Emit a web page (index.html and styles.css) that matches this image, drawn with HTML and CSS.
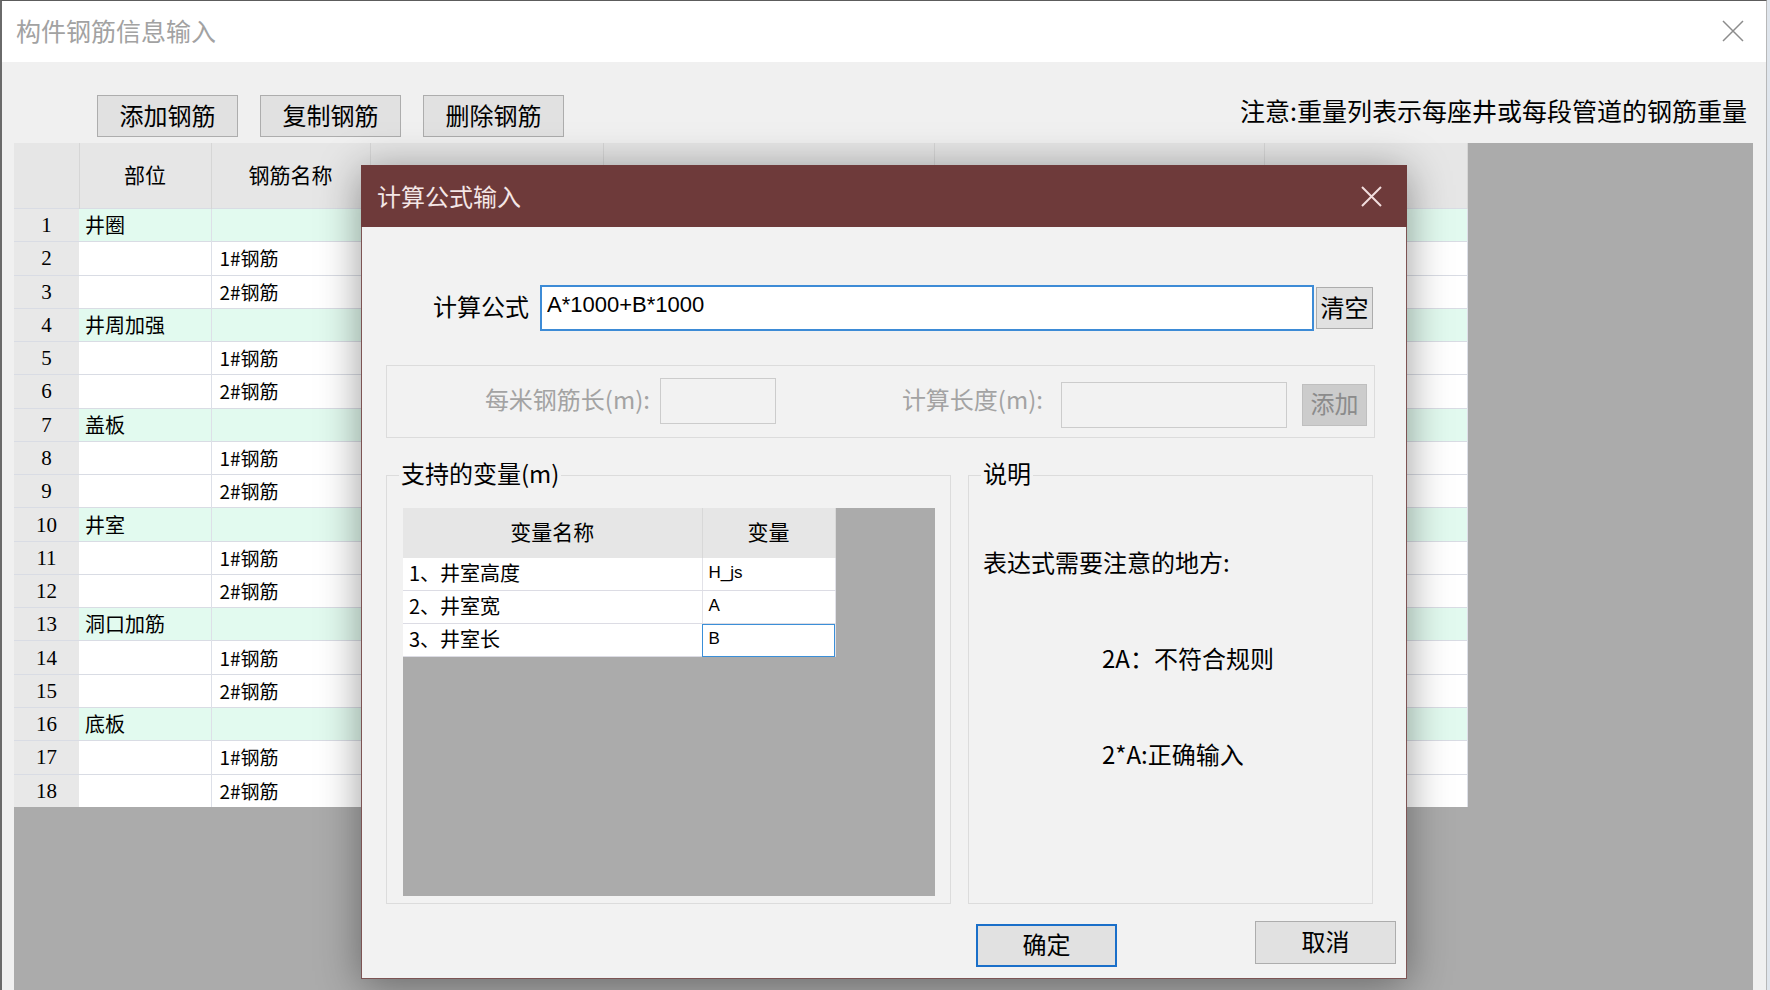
FILE: index.html
```html
<!DOCTYPE html>
<html lang="zh-CN">
<head>
  <meta charset="UTF-8">
  <title>构件钢筋信息输入</title>
  <link rel="stylesheet" href="styles.css">
</head>
<body>
<div class="window">
  <!-- 标题栏 -->
  <div class="titlebar">
    <span class="title">构件钢筋信息输入</span>
    <svg class="win-close" width="22" height="22" viewBox="0 0 22 22"><path d="M1 1L21 21M21 1L1 21" stroke="#8c8c8c" stroke-width="1.5" fill="none"/></svg>
  </div>

  <!-- 工具栏 -->
  <div class="toolbar">
    <button class="btn tool-btn">添加钢筋</button>
    <button class="btn tool-btn">复制钢筋</button>
    <button class="btn tool-btn">删除钢筋</button>
    <span class="note">注意:重量列表示每座井或每段管道的钢筋重量</span>
  </div>

  <!-- 钢筋表格 -->
  <div class="grid-area">
    <table class="rebar-table">
      <colgroup>
        <col style="width:65px"><col style="width:132px"><col style="width:159px"><col style="width:233px"><col style="width:331px"><col style="width:330px"><col style="width:203px">
      </colgroup>
      <thead>
        <tr><th></th><th>部位</th><th>钢筋名称</th><th></th><th></th><th></th><th></th></tr>
      </thead>
      <tbody>
        <tr class="part-row"><td class="num">1</td><td class="part">井圈</td><td></td><td></td><td></td><td></td><td></td></tr>
        <tr><td class="num">2</td><td></td><td class="name">1#钢筋</td><td></td><td></td><td></td><td></td></tr>
        <tr><td class="num">3</td><td></td><td class="name">2#钢筋</td><td></td><td></td><td></td><td></td></tr>
        <tr class="part-row"><td class="num">4</td><td class="part">井周加强</td><td></td><td></td><td></td><td></td><td></td></tr>
        <tr><td class="num">5</td><td></td><td class="name">1#钢筋</td><td></td><td></td><td></td><td></td></tr>
        <tr><td class="num">6</td><td></td><td class="name">2#钢筋</td><td></td><td></td><td></td><td></td></tr>
        <tr class="part-row"><td class="num">7</td><td class="part">盖板</td><td></td><td></td><td></td><td></td><td></td></tr>
        <tr><td class="num">8</td><td></td><td class="name">1#钢筋</td><td></td><td></td><td></td><td></td></tr>
        <tr><td class="num">9</td><td></td><td class="name">2#钢筋</td><td></td><td></td><td></td><td></td></tr>
        <tr class="part-row"><td class="num">10</td><td class="part">井室</td><td></td><td></td><td></td><td></td><td></td></tr>
        <tr><td class="num">11</td><td></td><td class="name">1#钢筋</td><td></td><td></td><td></td><td></td></tr>
        <tr><td class="num">12</td><td></td><td class="name">2#钢筋</td><td></td><td></td><td></td><td></td></tr>
        <tr class="part-row"><td class="num">13</td><td class="part">洞口加筋</td><td></td><td></td><td></td><td></td><td></td></tr>
        <tr><td class="num">14</td><td></td><td class="name">1#钢筋</td><td></td><td></td><td></td><td></td></tr>
        <tr><td class="num">15</td><td></td><td class="name">2#钢筋</td><td></td><td></td><td></td><td></td></tr>
        <tr class="part-row"><td class="num">16</td><td class="part">底板</td><td></td><td></td><td></td><td></td><td></td></tr>
        <tr><td class="num">17</td><td></td><td class="name">1#钢筋</td><td></td><td></td><td></td><td></td></tr>
        <tr><td class="num">18</td><td></td><td class="name">2#钢筋</td><td></td><td></td><td></td><td></td></tr>
      </tbody>
    </table>
  </div>

  <!-- 计算公式输入 对话框 -->
  <div class="dialog">
    <div class="dlg-header">
      <span class="dlg-title">计算公式输入</span>
      <svg class="dlg-close" width="21" height="21" viewBox="0 0 21 21"><path d="M1 1L20 20M20 1L1 20" stroke="#f2dede" stroke-width="2" fill="none"/></svg>
    </div>
    <div class="dlg-body">
      <div class="formula-row">
        <span class="formula-label">计算公式</span>
        <input class="formula-input" type="text" value="A*1000+B*1000">
        <button class="btn clear-btn">清空</button>
      </div>

      <div class="length-box">
        <span class="dis-label label-1">每米钢筋长(m):</span>
        <input class="dis-input input-1" type="text" disabled>
        <span class="dis-label label-2">计算长度(m):</span>
        <input class="dis-input input-2" type="text" disabled>
        <button class="btn add-btn" disabled>添加</button>
      </div>

      <div class="groups">
        <fieldset class="group-box vars">
          <legend>支持的变量(m)</legend>
          <div class="var-grid">
            <table class="var-table">
              <colgroup><col style="width:299px"><col style="width:133px"></colgroup>
              <thead>
                <tr><th>变量名称</th><th>变量</th></tr>
              </thead>
              <tbody>
                <tr><td>1、井室高度</td><td class="code">H_js</td></tr>
                <tr><td>2、井室宽</td><td class="code">A</td></tr>
                <tr><td>3、井室长</td><td class="code selected">B</td></tr>
              </tbody>
            </table>
          </div>
        </fieldset>

        <fieldset class="group-box help">
          <legend>说明</legend>
          <p class="help-head">表达式需要注意的地方:</p>
          <p class="help-item">2A：不符合规则</p>
          <p class="help-item">2*A:正确输入</p>
        </fieldset>
      </div>

      <div class="dlg-footer">
        <button class="btn ok-btn">确定</button>
        <button class="btn cancel-btn">取消</button>
      </div>
    </div>
  </div>
</div>
</body>
</html>
```

FILE: styles.css
```css
  body {
    margin: 0;
    background: #dfe5ec;
    font-family: "Noto Sans CJK SC", sans-serif;
    overflow: hidden;
  }

  /* 外层窗口 */
  .window {
    position: relative;
    width: 1767px;
    height: 990px;
    box-sizing: border-box;
    border-top: 1px solid #5c5c5c;
    border-left: 2px solid #6a6a6a;
    border-right: 1px solid #b8b8b8;
    background: #f0f0f0;
    display: flex;
    flex-direction: column;
    overflow: hidden;
  }

  .titlebar {
    height: 61px;
    flex-shrink: 0;
    background: #fff;
    display: flex;
    align-items: center;
    justify-content: space-between;
    padding: 0 0 3px 14px;
    box-sizing: border-box;
  }
  .title {
    font-size: 25px;
    color: #a2a2a2;
    line-height: 30px;
  }
  .win-close {
    margin: 2px 22px 0 0;
  }

  /* 通用按钮 */
  .btn {
    font-family: "Noto Sans CJK SC", sans-serif;
    font-size: 24px;
    line-height: 28px;
    color: #000;
    background: #e1e1e1;
    border: 1px solid #adadad;
    padding: 0 0 3px;
    box-sizing: border-box;
  }

  .toolbar {
    height: 81px;
    flex-shrink: 0;
    display: flex;
    align-items: flex-start;
    padding: 33px 19px 0 95px;
    box-sizing: border-box;
  }
  .tool-btn {
    width: 141px;
    height: 42px;
    margin-right: 22px;
  }
  .note {
    margin-left: auto;
    margin-top: 0;
    font-size: 25px;
    line-height: 30px;
    color: #000;
  }

  /* 背景表格 */
  .grid-area {
    flex: 1;
    margin: 0 13px 0 12px;
    background: #ababab;
  }
  .rebar-table {
    border-collapse: collapse;
    table-layout: fixed;
    width: 1453px;
    background: #fff;
  }
  .rebar-table th {
    height: 61px;
    padding: 0 0 4px;
    background: #e6e6e6;
    border-right: 1px solid #d6d6d6;
    font-size: 21px;
    font-weight: normal;
    color: #000;
    line-height: 24px;
  }
  .rebar-table td {
    height: 32.28px;
    padding: 0;
    border-top: 1px solid #d9dce4;
    border-right: 1px solid #dde0e8;
    font-size: 20px;
    line-height: 24px;
    color: #000;
    white-space: nowrap;
  }
  .rebar-table tr.part-row td {
    background: #e2faef;
  }
  .rebar-table td.num,
  .rebar-table tr.part-row td.num {
    background: #e8e8e8;
    text-align: center;
    font-family: "Liberation Serif", serif;
    font-size: 21px;
    border-right: none;
  }
  .rebar-table td.part {
    padding-left: 6px;
  }
  .rebar-table td.name {
    padding-left: 8px;
    font-size: 19px;
  }

  /* 对话框 */
  .dialog {
    position: absolute;
    left: 359px;
    top: 164px;
    width: 1046px;
    height: 814px;
    box-sizing: border-box;
    border: 1px solid #7d5454;
    border-top: none;
    background: #f2f2f2;
    box-shadow: 0 6px 40px rgba(0, 0, 0, 0.4);
    display: flex;
    flex-direction: column;
  }
  .dlg-header {
    height: 62px;
    flex-shrink: 0;
    margin: 0 -1px;
    background: #6e3a3a;
    display: flex;
    align-items: center;
    justify-content: space-between;
    padding-left: 16px;
  }
  .dlg-title {
    font-size: 24px;
    line-height: 30px;
    color: #f4e6e6;
  }
  .dlg-close {
    margin-right: 25px;
  }

  .formula-row {
    display: flex;
    align-items: center;
    height: 46px;
    margin-top: 58px;
    padding-left: 71px;
  }
  .formula-label {
    font-size: 24px;
    line-height: 30px;
    padding-bottom: 4px;
    color: #000;
  }
  .formula-input {
    width: 774px;
    height: 46px;
    margin-left: 11px;
    box-sizing: border-box;
    border: 2px solid #3d8bd6;
    padding: 0 0 6px 5px;
    font-family: "Liberation Sans", sans-serif;
    font-size: 22px;
    color: #000;
    background: #fff;
    outline: none;
  }
  .clear-btn {
    width: 57px;
    height: 42px;
    margin-left: 2px;
  }

  /* 长度输入（禁用） */
  .length-box {
    width: 989px;
    height: 73px;
    margin: 34px 0 0 24px;
    box-sizing: border-box;
    border: 1px solid #dcdcdc;
    display: flex;
    align-items: center;
  }
  .dis-label {
    font-size: 24px;
    line-height: 30px;
    padding-bottom: 5px;
    color: #a3a3a3;
    text-align: right;
    box-sizing: border-box;
  }
  .label-1 { width: 263px; }
  .label-2 { width: 267px; }
  .dis-input {
    height: 46px;
    box-sizing: border-box;
    border: 1px solid #cccccc;
    background: #f2f2f2;
    padding: 0;
  }
  .input-1 {
    width: 116px;
    margin-left: 10px;
    margin-bottom: 2px;
  }
  .input-2 {
    width: 226px;
    margin-left: 18px;
    margin-top: 6px;
  }
  .add-btn {
    width: 65px;
    height: 42px;
    margin-left: 15px;
    margin-top: 6px;
    background: #cccccc;
    border-color: #bfbfbf;
    color: #8b8b8b;
  }

  /* 分组框 */
  .groups {
    display: flex;
    gap: 17px;
    margin: 22px 0 0 24px;
  }
  .group-box {
    margin: 0;
    padding: 0;
    min-width: 0;
    height: 444px;
    box-sizing: border-box;
    border: 1px solid #dcdcdc;
  }
  .group-box legend {
    font-size: 24px;
    line-height: 26px;
    padding: 0 2px 4px;
    margin-left: 12px;
    color: #000;
  }
  .vars {
    width: 565px;
  }
  .help {
    width: 405px;
  }

  .var-grid {
    width: 532px;
    height: 388px;
    margin: 18px 0 0 16px;
    background: #ababab;
  }
  .var-table {
    border-collapse: collapse;
    table-layout: fixed;
    width: 432px;
  }
  .var-table th {
    height: 45px;
    padding: 0 0 5px;
    background: #e6e6e6;
    border-right: 1px solid #d8d8d8;
    font-size: 21px;
    font-weight: normal;
    line-height: 24px;
  }
  .var-table td {
    height: 29px;
    padding: 0 0 3px 6px;
    background: #fff;
    border-bottom: 1px solid #dcdce4;
    border-right: 1px solid #e2e2e8;
    font-size: 20px;
    line-height: 24px;
  }
  .var-table td.code {
    font-family: "Liberation Sans", sans-serif;
    font-size: 17px;
  }
  .var-table td.selected {
    outline: 1px solid #3b8fd8;
    outline-offset: -1px;
  }

  .help-head {
    margin: 57px 0 0 14px;
    font-size: 24px;
    line-height: 30px;
  }
  .help-item {
    margin: 66px 0 0 133px;
    font-size: 24px;
    line-height: 30px;
  }

  .dlg-footer {
    display: flex;
    align-items: flex-start;
    margin-top: 17px;
  }
  .ok-btn {
    width: 141px;
    height: 43px;
    margin: 3px 0 0 614px;
    border: 2px solid #1a6fc9;
  }
  .cancel-btn {
    width: 141px;
    height: 43px;
    margin-left: 138px;
  }
```
